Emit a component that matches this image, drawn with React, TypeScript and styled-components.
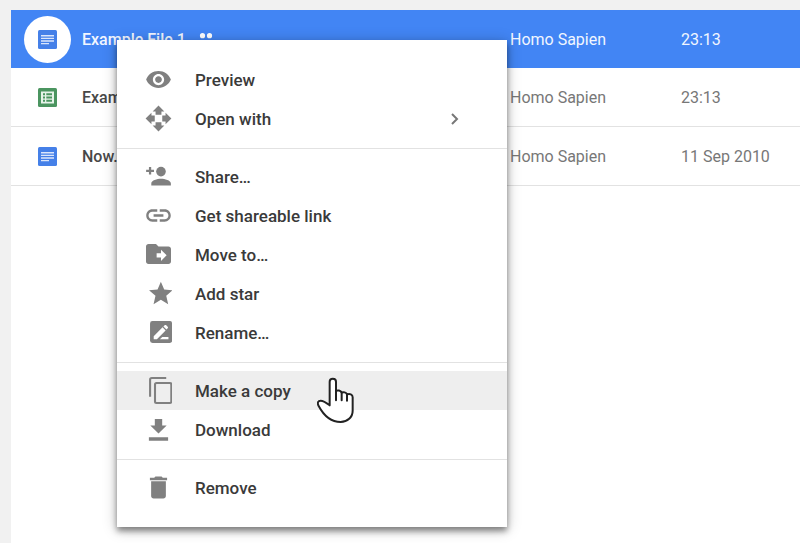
import React from "react";
import styled, { createGlobalStyle } from "styled-components";

const GlobalStyle = createGlobalStyle`
  *, *::before, *::after { box-sizing: border-box; }
  body {
    margin: 0;
    background: #f1f1f1;
    font-family: Roboto, "Liberation Sans", sans-serif;
    font-size: 17px;
    line-height: 20px;
  }
`;

const Page = styled.div`
  position: relative;
  display: flex;
  min-height: 100vh;
  padding: 10px 0 0 11px;
  overflow: hidden;
`;

const FileList = styled.main`
  flex: 1;
  background: #fff;
`;

const FileTable = styled.table`
  width: 100%;
  table-layout: fixed;
  border-collapse: separate;
  border-spacing: 0;
`;

const IconColumn = styled.col`
  width: 71px;
`;
const OwnerColumn = styled.col`
  width: 171px;
`;
const DateColumn = styled.col`
  width: 119px;
`;

const FileRow = styled.tr<{ $selected?: boolean }>`
  background: ${(p) => (p.$selected ? "#4285f4" : "#fff")};
  color: ${(p) => (p.$selected ? "#f1f6ff" : "#777")};

  td {
    height: ${(p) => (p.$selected ? 58 : 59)}px;
    border-bottom: ${(p) => (p.$selected ? "none" : "1px solid #e2e2e2")};
  }
`;

const IconCell = styled.td`
  padding: 0 0 0 13px;
`;

const TextCell = styled.td`
  padding: 2px 0 0;
  font-size: 16px;
  white-space: nowrap;
`;

const NameCell = styled(TextCell)<{ $selected?: boolean }>`
  font-weight: 500;
  color: ${(p) => (p.$selected ? "#f1f6ff" : "#484848")};
`;

const NameGroup = styled.span`
  display: flex;
  align-items: center;
  gap: 12px;
`;

const FileBadge = styled.span<{ $selected?: boolean }>`
  display: flex;
  align-items: center;
  justify-content: center;
  width: 47px;
  height: 47px;
  border-radius: 50%;
  background: ${(p) => (p.$selected ? "#fff" : "transparent")};
`;

const Menu = styled.div`
  position: absolute;
  top: 40px;
  left: 117px;
  width: 390px;
  padding: 20px 0;
  background: #fff;
  box-shadow: 0 4px 6px rgba(0, 0, 0, 0.42), 0 2px 14px rgba(0, 0, 0, 0.24);
`;

const MenuItem = styled.button<{ $active?: boolean }>`
  display: flex;
  align-items: center;
  gap: 23px;
  width: 100%;
  height: 39px;
  padding: 0 46px 0 28px;
  border: 0;
  background: ${(p) => (p.$active ? "#eee" : "transparent")};
  color: #3a3a3a;
  font: inherit;
  font-weight: 500;
  text-align: left;
`;

const MenuLabel = styled.span`
  flex: 1;
`;

const Divider = styled.hr`
  height: 1px;
  margin: 10px 0 8px;
  border: 0;
  background: #e2e2e2;
`;

const MenuIcon = styled.svg`
  flex: none;
  width: 27px;
  height: 27px;
  fill: #808080;
`;

const Pointer = styled.svg`
  position: absolute;
  top: 377px;
  left: 317px;
  width: 37px;
  height: 46px;
  pointer-events: none;
`;

type FileKind = "doc" | "sheet";

function FileIcon({ kind }: { kind: FileKind }) {
  if (kind === "sheet") {
    return (
      <svg width="19" height="19" viewBox="0 0 19 19" role="img" aria-label="Spreadsheet">
        <rect width="19" height="19" rx="1.5" fill="#4b9560" />
        <rect x="3" y="3.5" width="13" height="12" fill="#e6f3e9" />
        <path
          d="M5 5.3h2v2H5zM8.3 5.3H14v2H8.3zM5 8.5h2v2H5zM8.3 8.5H14v2H8.3zM5 11.7h2v2H5zM8.3 11.7H14v2H8.3z"
          fill="#4b9560"
        />
      </svg>
    );
  }
  return (
    <svg width="19" height="19" viewBox="0 0 19 19" role="img" aria-label="Document">
      <rect width="19" height="19" rx="1.5" fill="#4580e8" />
      <path d="M3 5h13v1.4H3zM3 7.7h13v1.4H3zM3 10.3h13v1.4H3zM3 12.9h8v1.4H3z" fill="#dbe6fb" />
    </svg>
  );
}

function SharedIcon() {
  return (
    <svg width="16" height="14" viewBox="0 0 16 14" fill="#fff" role="img" aria-label="Shared">
      <circle cx="4.5" cy="2.7" r="2.600" />
      <circle cx="11.500" cy="2.7" r="2.600" />
      <path d="M0 11V9.6C0 7.8 2.6 7 4.7 7s4.1.8 4.1 2.6V11zM10 11V9.6c0-1-.5-1.800-1.200-2.400.8-.2 1.700-.2 2.500-.2 2.100 0 4.700.8 4.700 2.600V11z" />
    </svg>
  );
}

interface IconShape {
  viewBox: string;
  art: React.ReactNode;
}

const icons: Record<string, IconShape> = {
  preview: {
    viewBox: "0 0 24 24",
    art: (
      <path d="M12 4.500C7 4.500 2.730 7.610 1 12c1.730 4.390 6 7.500 11 7.500s9.270-3.110 11-7.500c-1.730-4.390-6-7.500-11-7.500zM12 17c-2.760 0-5-2.240-5-5s2.240-5 5-5 5 2.240 5 5-2.240 5-5 5zm0-8c-1.660 0-3 1.340-3 3s1.340 3 3 3 3-1.340 3-3-1.340-3-3-3z" />
    ),
  },
  openWith: {
    viewBox: "0.5 0.5 23 23",
    art: (
      <path d="M9.500 8.800h5V6H17l-5-5-5 5h2.500zM8.800 9.500H6V7l-5 5 5 5v-2.500h2.800zM23 12l-5-5v2.500h-2.800v5H18V17zM14.500 15.200h-5V18H7l5 5 5-5h-2.500z" />
    ),
  },
  share: {
    viewBox: "0 0 24 24",
    art: (
      <>
        <circle cx="14.200" cy="7.600" r="4.300" />
        <path d="M5.600 20v-1.800c0-2.800 5.200-4.200 8.600-4.200s8.800 1.400 8.800 4.200V20zM3.500 3.600h2v2.300H8v2.100H5.500v2.300h-2V8H1V5.900h2.500z" />
      </>
    ),
  },
  link: {
    viewBox: "1 1 22 22",
    art: (
      <path d="M3.900 12c0-1.710 1.390-3.100 3.100-3.100h4V7H7c-2.760 0-5 2.240-5 5s2.240 5 5 5h4v-1.900H7c-1.710 0-3.100-1.390-3.100-3.100zM8 13h8v-2H8v2zm9-6h-4v1.900h4c1.710 0 3.100 1.390 3.100 3.100s-1.390 3.100-3.100 3.100h-4V17h4c2.760 0 5-2.240 5-5s-2.240-5-5-5z" />
    ),
  },
  move: {
    viewBox: "1.200 1.600 21.600 21.600",
    art: (
      <path d="M20 6h-8l-2-2H4c-1.100 0-2 .9-2 2v12c0 1.100.9 2 2 2h16c1.100 0 2-.9 2-2V8c0-1.100-.9-2-2-2zm-6 11.500v-2.800h-3.500v-3.400H14V8.500l4.500 4.500z" />
    ),
  },
  star: {
    viewBox: "-1.400 0.600 22.800 22.800",
    art: <path d="M12 17.270L18.180 21l-1.640-7.030L22 9.240l-7.190-.61L12 2 9.190 8.630 2 9.240l5.460 4.730L5.820 21z" />,
  },
  rename: {
    viewBox: "-1.100 1.400 22 22",
    art: (
      <>
        <rect x="3" y="3" width="18" height="18" rx="2" />
        <path d="M6 18v-2.600l7.200-7.200 2.500 2.500L8.600 18zM13.900 7.500l1-1c.4-.4.900-.4 1.300 0l1.200 1.200c.4.400.4.900 0 1.300l-1 1zM11 18l2-2h5v2z" fill="#fff" />
      </>
    ),
  },
  copy: {
    viewBox: "-1.300 1 22 22",
    art: (
      <g fill="none" stroke="#808080" strokeWidth="1.700">
        <path d="M2.850 17V3.200c0-.75.600-1.350 1.350-1.350H16" />
        <rect x="6.850" y="5.850" width="13.300" height="16.300" rx="1.200" />
      </g>
    ),
  },
  download: {
    viewBox: "1.750 0.750 20.500 20.500",
    art: <path d="M9.200 3h5.600v5h3.400L12 14 5.800 8h3.400zM4.700 16.900h14.600v2.700H4.700z" />,
  },
  remove: {
    viewBox: "1 1 22 22",
    art: <path d="M6 19c0 1.100.9 2 2 2h8c1.100 0 2-.9 2-2V7H6v12zM19 4h-3.500l-1-1h-5l-1 1H5v2h14V4z" />,
  },
};

interface FileEntry {
  name: string;
  kind: FileKind;
  owner: string;
  modified: string;
  selected?: boolean;
  shared?: boolean;
}

const files: FileEntry[] = [
  { name: "Example File 1", kind: "doc", owner: "Homo Sapien", modified: "23:13", selected: true, shared: true },
  { name: "Example File 2", kind: "sheet", owner: "Homo Sapien", modified: "23:13" },
  { name: "Now...", kind: "doc", owner: "Homo Sapien", modified: "11 Sep 2010" },
];

interface MenuEntry {
  icon: string;
  label: string;
  submenu?: boolean;
  active?: boolean;
}

const menuGroups: MenuEntry[][] = [
  [
    { icon: "preview", label: "Preview" },
    { icon: "openWith", label: "Open with", submenu: true },
  ],
  [
    { icon: "share", label: "Share…" },
    { icon: "link", label: "Get shareable link" },
    { icon: "move", label: "Move to…" },
    { icon: "star", label: "Add star" },
    { icon: "rename", label: "Rename…" },
  ],
  [
    { icon: "copy", label: "Make a copy", active: true },
    { icon: "download", label: "Download" },
  ],
  [{ icon: "remove", label: "Remove" }],
];

export default function App() {
  return (
    <>
      <GlobalStyle />
      <Page>
        <FileList>
          <FileTable>
            <colgroup>
              <IconColumn />
              <col />
              <OwnerColumn />
              <DateColumn />
            </colgroup>
            <tbody>
              {files.map((file) => (
                <FileRow key={file.name} $selected={file.selected}>
                  <IconCell>
                    <FileBadge $selected={file.selected}>
                      <FileIcon kind={file.kind} />
                    </FileBadge>
                  </IconCell>
                  <NameCell $selected={file.selected}>
                    <NameGroup>
                      {file.name}
                      {file.shared && <SharedIcon />}
                    </NameGroup>
                  </NameCell>
                  <TextCell>{file.owner}</TextCell>
                  <TextCell>{file.modified}</TextCell>
                </FileRow>
              ))}
            </tbody>
          </FileTable>
        </FileList>

        <Menu role="menu">
          {menuGroups.map((group, index) => (
            <React.Fragment key={group[0].label}>
              {index > 0 && <Divider />}
              {group.map((item) => (
                <MenuItem key={item.label} type="button" role="menuitem" $active={item.active}>
                  <MenuIcon viewBox={icons[item.icon].viewBox} aria-hidden="true">
                    {icons[item.icon].art}
                  </MenuIcon>
                  <MenuLabel>{item.label}</MenuLabel>
                  {item.submenu && (
                    <svg width="12" height="14" viewBox="0 0 12 14" aria-hidden="true">
                      <path d="M3 2l5 5-5 5" fill="none" stroke="#777" strokeWidth="2" />
                    </svg>
                  )}
                </MenuItem>
              ))}
            </React.Fragment>
          ))}
        </Menu>

        <Pointer viewBox="21 36 111 138" aria-hidden="true">
          <path
            d="M59 121V50c0-12 19-12 19 0v28c4-3 14-2 17 5 5-3 14-1 16 5 8-3 17 0 17 9v40c0 20-16 34-36 34-28 0-50-18-66-48-5-9-2-16 6-16 9 0 18 7 27 14z"
            fill="#fff"
            stroke="#222"
            strokeWidth="6"
            strokeLinejoin="round"
          />
          <path d="M78 76v30M95 82v24M111 87v20" fill="none" stroke="#222" strokeWidth="6" strokeLinecap="round" />
        </Pointer>
      </Page>
    </>
  );
}
